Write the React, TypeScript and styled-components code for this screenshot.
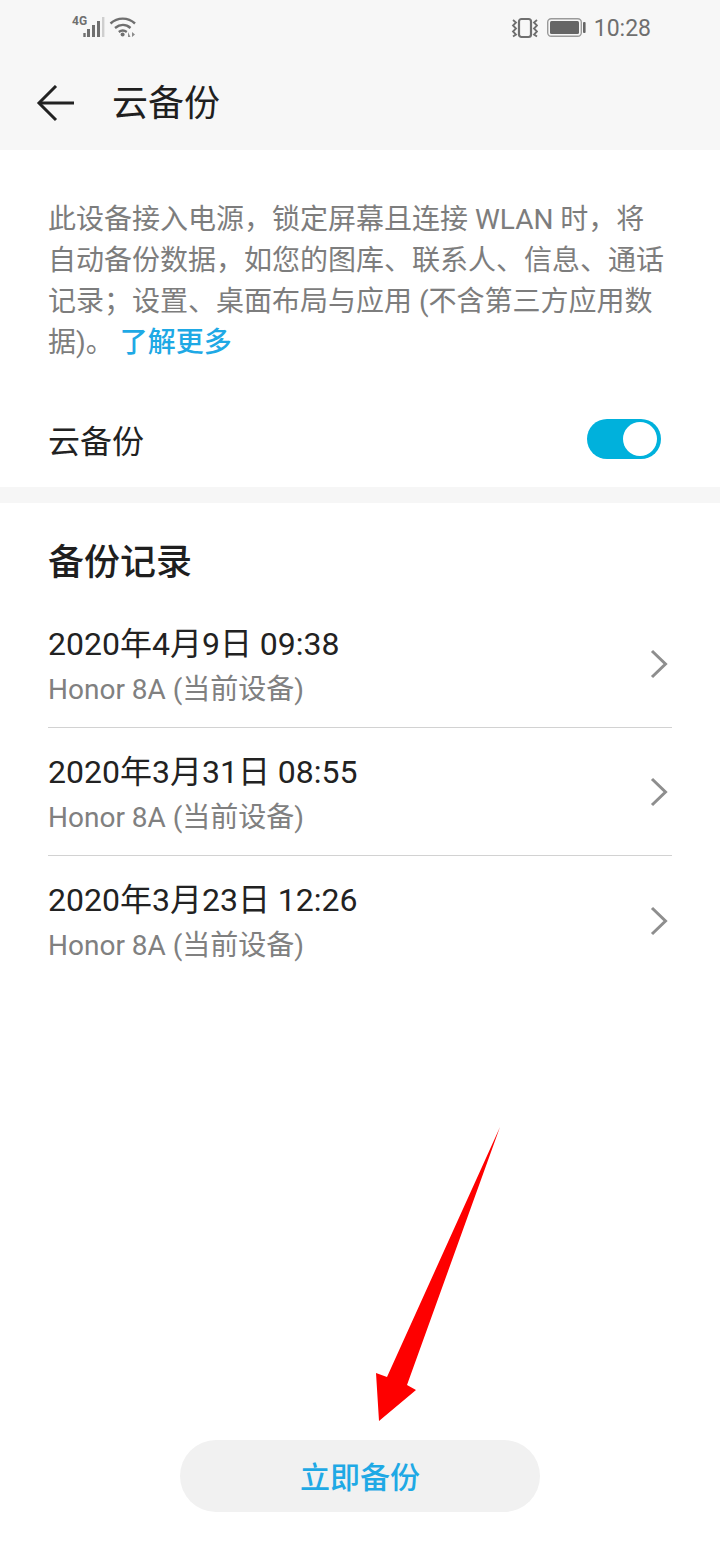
import React from "react";
import styled, { createGlobalStyle } from "styled-components";

const GlobalStyle = createGlobalStyle`
    html, body {
        margin: 0;
        padding: 0;
        background: #fff;
    }
    * {
        box-sizing: border-box;
    }
`;

const Page = styled.div`
    width: 720px;
    height: 1560px;
    position: relative;
    overflow: hidden;
    display: flex;
    flex-direction: column;
    background: #fff;
    font-family: Roboto, "Noto Sans CJK SC", sans-serif;
`;

const Header = styled.div`
    height: 150px;
    flex: none;
    background: #f7f7f7;
    display: flex;
    flex-direction: column;
`;

const StatusBar = styled.div`
    height: 54px;
    display: flex;
    align-items: center;
    justify-content: space-between;
    padding: 0 69px 0 70px;
`;

const StatusGroup = styled.div`
    display: flex;
    align-items: center;
    gap: ${(p: { $gap: number }) => p.$gap}px;
`;

const Clock = styled.span`
    font-size: 23px;
    color: #6f6f6f;
    line-height: 1;
    padding-top: 2px;
`;

const TitleBar = styled.div`
    flex: 1;
    display: flex;
    align-items: center;
    padding: 4px 0 0 36px;
    gap: 36px;
`;

const Title = styled.div`
    font-size: 36px;
    color: #1f1f1f;
    line-height: 1;
`;

const Intro = styled.div`
    padding: 49px 48px 0 48px;
    font-size: 28px;
    line-height: 41px;
    height: 226px;
    color: #7d7d7d;
    flex: none;
`;

const MoreLink = styled.span`
    color: #1fa9e5;
    font-weight: 500;
    margin-left: 6px;
`;

const SwitchRow = styled.div`
    height: 111px;
    flex: none;
    display: flex;
    align-items: center;
    justify-content: space-between;
    padding: 14px 59px 0 48px;
    font-size: 32px;
    color: #222;
`;

const Switch = styled.div`
    width: 74px;
    height: 40px;
    border-radius: 20px;
    background: #00b1dc;
    display: flex;
    align-items: center;
    justify-content: flex-end;
    padding-right: 4px;
`;

const Knob = styled.div`
    width: 34px;
    height: 34px;
    border-radius: 50%;
    background: #fff;
`;

const Band = styled.div`
    height: 16px;
    flex: none;
    background: #f6f6f6;
`;

const SectionTitle = styled.div`
    padding: 39px 48px 0;
    height: 97px;
    font-size: 36px;
    line-height: 42px;
    font-weight: 500;
    color: #1f1f1f;
    flex: none;
`;

const List = styled.div`
    margin: 0 48px;
    flex: none;
`;

const Row = styled.div`
    height: 128px;
    display: flex;
    align-items: center;
    justify-content: space-between;
    padding: 1px 3px 0 0;
    border-bottom: ${(p: { $last?: boolean }) => (p.$last ? "none" : "1px solid #d2d2d2")};
`;

const RowText = styled.div`
    display: flex;
    flex-direction: column;
    gap: 11px;
    padding-top: 2px;
`;

const RowTitle = styled.div`
    font-size: 32px;
    line-height: 38px;
    color: #222;
`;

const RowSub = styled.div`
    font-size: 28px;
    line-height: 32px;
    color: #808080;
`;

const Footer = styled.div`
    margin-top: auto;
    padding-bottom: 48px;
    display: flex;
    justify-content: center;
`;

const BackupButton = styled.div`
    width: 360px;
    height: 72px;
    border-radius: 36px;
    background: #f1f1f1;
    color: #1fa9e5;
    font-size: 30px;
    font-weight: 500;
    display: flex;
    align-items: center;
    justify-content: center;
    padding-bottom: 2px;
`;

const Annotation = styled.svg`
    position: absolute;
    left: 370px;
    top: 1120px;
`;

const SignalIcon = () => (
    <svg width="66" height="40" viewBox="0 0 66 40">
        <text x="2" y="18" fontFamily="Roboto, sans-serif" fontSize="12" fontWeight="700" fill="#6f6f6f">4G</text>
        <g fill="#6f6f6f">
            <rect x="13.3" y="26" width="2.4" height="4" />
            <rect x="17" y="22" width="3" height="8" />
            <rect x="22" y="18" width="3" height="12" />
            <rect x="27" y="14" width="3" height="16" />
        </g>
        <rect x="32" y="10" width="2.4" height="20" fill="#cfcfcf" />
        <g fill="none" stroke="#6f6f6f" strokeWidth="2.4">
            <path d="M40.5 16.5c7-6.5 17.5-6.5 24.5 0" />
            <path d="M45 21c5-4 11-4 15.5 0" />
            <path d="M48.8 25c2.5-1.8 5.4-1.8 8 0" />
        </g>
        <circle cx="52.6" cy="27.6" r="2" fill="#6f6f6f" />
        <path d="M58 30v-5l2.5 5zM62 25v5l3-2.5z" fill="#8c8c8c" />
    </svg>
);

const VibrateIcon = () => (
    <svg width="27" height="30" viewBox="0 0 27 30" fill="none" stroke="#6f6f6f">
        <rect x="8" y="7" width="12" height="18" rx="2.5" strokeWidth="2.2" />
        <path d="M2 8l3 2.5-3 3 3 3-3 3 3 3-3 2" strokeWidth="1.8" />
        <path d="M26 8l-3 2.5 3 3-3 3 3 3-3 3 3 2" strokeWidth="1.8" />
    </svg>
);

const BatteryIcon = () => (
    <svg width="40" height="24" viewBox="0 0 40 24">
        <rect x="1.7" y="3.7" width="33.6" height="17.6" rx="3.5" fill="none" stroke="#9a9a9a" strokeWidth="1.4" />
        <rect x="4" y="6" width="29" height="13" rx="1.5" fill="#666" />
        <rect x="37" y="7" width="2.6" height="11" rx="1" fill="#666" />
    </svg>
);

const BackIcon = () => (
    <svg width="40" height="38" viewBox="0 0 40 38" fill="none" stroke="#222" strokeWidth="3">
        <path d="M20 1L3 18l17 17" />
        <path d="M3 18h35" />
    </svg>
);

const ChevronIcon = () => (
    <svg width="20" height="30" viewBox="0 0 20 30" fill="none" stroke="#8e8e8e" strokeWidth="3">
        <path d="M3 2l13.5 13L3 28" />
    </svg>
);

const records = [
    { id: "a", date: "2020年4月9日 09:38" },
    { id: "b", date: "2020年3月31日 08:55" },
    { id: "c", date: "2020年3月23日 12:26" },
];

const App = () => {
    return (
        <Page>
            <GlobalStyle />
            <Header>
                <StatusBar>
                    <StatusGroup $gap={0}>
                        <SignalIcon />
                    </StatusGroup>
                    <StatusGroup $gap={8}>
                        <VibrateIcon />
                        <BatteryIcon />
                        <Clock>10:28</Clock>
                    </StatusGroup>
                </StatusBar>
                <TitleBar>
                    <BackIcon />
                    <Title>云备份</Title>
                </TitleBar>
            </Header>
            <Intro>
                此设备接入电源，锁定屏幕且连接 WLAN 时，将自动备份数据，如您的图库、联系人、信息、通话记录；设置、桌面布局与应用 (不含第三方应用数据)。<MoreLink>了解更多</MoreLink>
            </Intro>
            <SwitchRow>
                云备份
                <Switch>
                    <Knob />
                </Switch>
            </SwitchRow>
            <Band />
            <SectionTitle>备份记录</SectionTitle>
            <List>
                {records.map((r, i) => (
                    <Row key={r.id} $last={i === records.length - 1}>
                        <RowText>
                            <RowTitle>{r.date}</RowTitle>
                            <RowSub>Honor 8A (当前设备)</RowSub>
                        </RowText>
                        <ChevronIcon />
                    </Row>
                ))}
            </List>
            <Footer>
                <BackupButton>立即备份</BackupButton>
            </Footer>
            <Annotation width="140" height="310" viewBox="370 1120 140 310">
                <path d="M500 1127L407 1385L416 1390L379 1421L376 1373L387 1377Z" fill="#fe0000" />
            </Annotation>
        </Page>
    );
};

export default App;
